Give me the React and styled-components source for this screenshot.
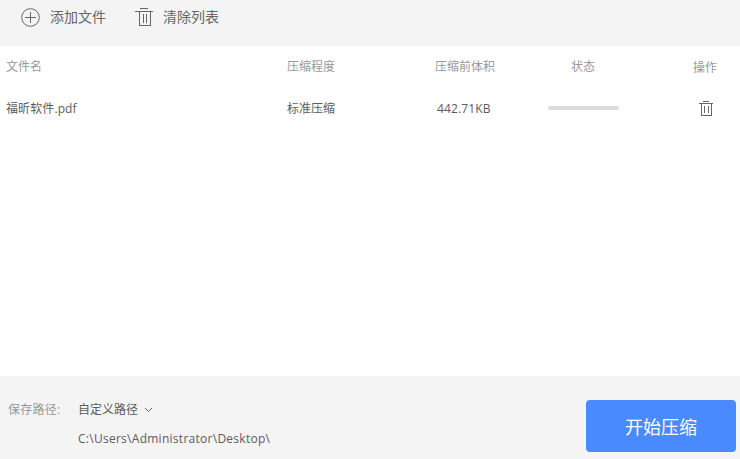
import React from "react";
import styled, { createGlobalStyle } from "styled-components";

const Global = createGlobalStyle`
  html, body { margin: 0; padding: 0; background: #fff; }
  body { font-family: "Open Sans", "Noto Sans CJK SC", sans-serif; }
  * { box-sizing: border-box; }
  svg { display: block; }
`;

const Page = styled.div`
  width: 740px;
  height: 459px;
  display: flex;
  flex-direction: column;
  overflow: hidden;
`;

const Toolbar = styled.div`
  height: 46px;
  flex: none;
  background: #f4f4f4;
  display: flex;
  align-items: flex-start;
  padding: 7px 0 0 21px;
  gap: 29px;
`;

const ToolButton = styled.div`
  display: flex;
  align-items: center;
  gap: 10px;
  height: 20px;
  font-size: 14px;
  line-height: 20px;
  color: #666;
`;

const Table = styled.div`
  flex: 1;
  padding-left: 6px;
`;

const Row = styled.div`
  display: grid;
  grid-template-columns: 281px 148px 113px 145px 47px;
  height: ${(p) => p.$h}px;
  align-items: center;
  font-size: 12px;
  color: ${(p) => p.$color};
`;

const Cell = styled.div`
  padding-left: ${(p) => p.$left || 0}px;
  padding-top: ${(p) => p.$down || 0}px;
  white-space: nowrap;
  letter-spacing: ${(p) => p.$spacing || 0}px;
`;

const StatusHead = styled.div`
  width: 70px;
  text-align: center;
`;

const Track = styled.div`
  width: 71px;
  height: 4px;
  border-radius: 2px;
  background: #dcdcdc;
`;

const Footer = styled.div`
  height: 83px;
  flex: none;
  background: #f4f4f4;
  display: flex;
  align-items: flex-start;
  padding-left: 8px;
`;

const PathLabel = styled.div`
  width: 70px;
  padding-top: 25px;
  font-size: 12px;
  line-height: 17px;
  color: #999;
  letter-spacing: 0.25px;
`;

const PathBlock = styled.div`
  width: 508px;
  padding-top: 25px;
  font-size: 12px;
  line-height: 17px;
  color: #5c5c5c;
  display: flex;
  flex-direction: column;
  gap: 12px;
`;

const Select = styled.div`
  display: flex;
  align-items: center;
  gap: 6px;
`;

const PathText = styled.div`
  letter-spacing: 0.27px;
`;

const StartButton = styled.button`
  width: 150px;
  height: 52px;
  margin-top: 24px;
  border: 0;
  border-radius: 4px;
  background: #4a8aff;
  color: #fff;
  font-family: inherit;
  font-size: 18px;
  padding: 0;
`;

const ToolbarTrash = () => (
  <svg width="18" height="18" viewBox="0 0 18 18" fill="none" stroke="#666" strokeWidth="1" shapeRendering="crispEdges">
    <path d="M5 0.5H13M0 3.5H18M4.5 3.5V17.5H15.5V3.5M8.5 6V15M11.5 6V15" />
  </svg>
);

const RowTrash = () => (
  <svg width="14" height="15" viewBox="0 0 14 15" fill="none" stroke="#666" strokeWidth="1" shapeRendering="crispEdges">
    <path d="M4 0.5H10M0 2.5H14M2.5 2.5V14.5H12.5V2.5M5.5 5V12M9.5 5V12" />
  </svg>
);

export default function App() {
  return (
    <Page>
      <Global />
      <Toolbar>
        <ToolButton>
          <svg width="19" height="19" viewBox="0 0 19 19" fill="none" stroke="#666" strokeWidth="1">
            <circle cx="9.5" cy="9.5" r="8.8" />
            <path d="M9.5 4V15M4 9.5H15" />
          </svg>
          添加文件
        </ToolButton>
        <ToolButton>
          <ToolbarTrash />
          清除列表
        </ToolButton>
      </Toolbar>
      <Table>
        <Row $h={40} $color="#999">
          <Cell>文件名</Cell>
          <Cell>压缩程度</Cell>
          <Cell>压缩前体积</Cell>
          <StatusHead>状态</StatusHead>
          <Cell $down={2}>操作</Cell>
        </Row>
        <Row $h={44} $color="#5c5c5c">
          <Cell $spacing={0.1}>福昕软件.pdf</Cell>
          <Cell>标准压缩</Cell>
          <Cell $left={2} $spacing={0.12}>442.71KB</Cell>
          <Track />
          <Cell $left={6} $down={1}>
            <RowTrash />
          </Cell>
        </Row>
      </Table>
      <Footer>
        <PathLabel>保存路径:</PathLabel>
        <PathBlock>
          <Select>
            自定义路径
            <svg width="9" height="6" viewBox="0 0 9 6" fill="none" stroke="#666" strokeWidth="1">
              <path d="M1 1L4.5 4.5L8 1" />
            </svg>
          </Select>
          <PathText>C:\Users\Administrator\Desktop\</PathText>
        </PathBlock>
        <StartButton>开始压缩</StartButton>
      </Footer>
    </Page>
  );
}
